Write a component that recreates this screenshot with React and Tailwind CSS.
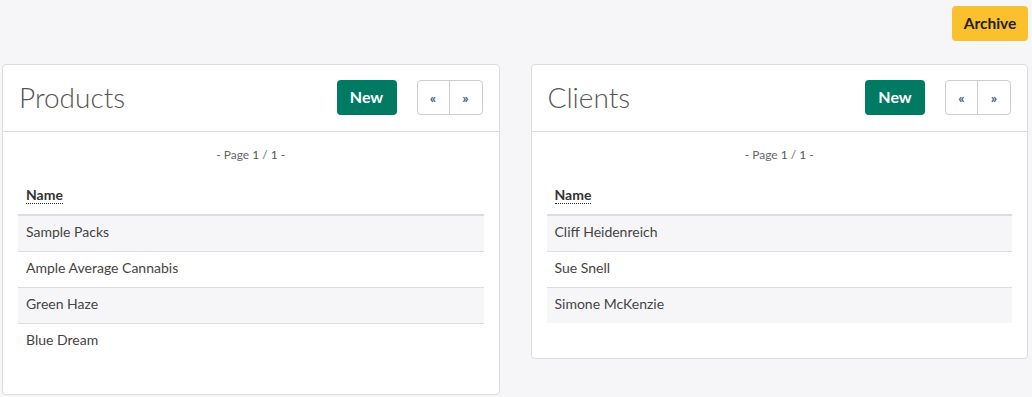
import React from 'react';

const products = ['Sample Packs', 'Ample Average Cannabis', 'Green Haze', 'Blue Dream'];
const clients = ['Cliff Heidenreich', 'Sue Snell', 'Simone McKenzie'];

function Panel({ title, rows }) {
  return (
    <div className="flex-1 self-start bg-white border border-[#dcdcdc] rounded-[4px]">
      <div className="flex items-center justify-between h-[67px] pl-[16px] pr-[16px] pb-[2px] border-b border-[#dcdcdc]">
        <h2 className="text-[28px] font-light text-[#555] leading-none">{title}</h2>
        <div className="flex items-center gap-[20px]">
          <button className="h-[35px] w-[60px] rounded-[4px] bg-[#007a62] text-white font-bold text-[16px]">New</button>
          <div className="flex h-[35px] border border-[#cccccc] rounded-[4px]">
            <button className="w-[32px] text-[14px] font-bold text-[#3d5a80] border-r border-[#cccccc]">«</button>
            <button className="w-[32px] text-[14px] font-bold text-[#3d5a80]">»</button>
          </div>
        </div>
      </div>
      <div className="px-[15px] pt-[15px] pb-[35px]">
        <div className="text-center text-[12px] leading-[16px] text-[#666]">
          - Page <span className="text-[#555]">1</span> / <span className="text-[#555]">1</span> -
        </div>
        <div className="mt-[15px]">
          <div className="h-[38px] flex items-center px-[8px] pb-[2px] border-b-2 border-[#dddddd]">
            <span className="text-[14px] font-bold text-[#333] border-b border-dotted border-[#333] leading-[16px]">Name</span>
          </div>
          {rows.map((r, i) => (
            <div
              key={r}
              className={
                'h-[35px] box-content pt-0 ' +
                (i > 0 ? 'border-t border-[#dddddd] ' : '') +
                (i % 2 === 0 ? 'bg-[#f6f6f8]' : 'bg-white')
              }
            >
              <div className="px-[8px] pt-[6px] text-[14px] leading-[20px] text-[#444]">{r}</div>
            </div>
          ))}
        </div>
      </div>
    </div>
  );
}

export default function App() {
  return (
    <div className="min-h-[397px] bg-[#f6f6f8] pl-[2px] pr-[4px] pt-[6px]" style={{ fontFamily: 'Lato, "Open Sans", sans-serif' }}>
      <div className="flex justify-end">
        <button className="h-[35px] w-[76px] rounded-[4px] bg-[#fbc02d] text-[#222] font-bold text-[15.5px]">Archive</button>
      </div>
      <div className="flex gap-[31px] mt-[23px]">
        <Panel title="Products" rows={products} />
        <Panel title="Clients" rows={clients} />
      </div>
    </div>
  );
}
